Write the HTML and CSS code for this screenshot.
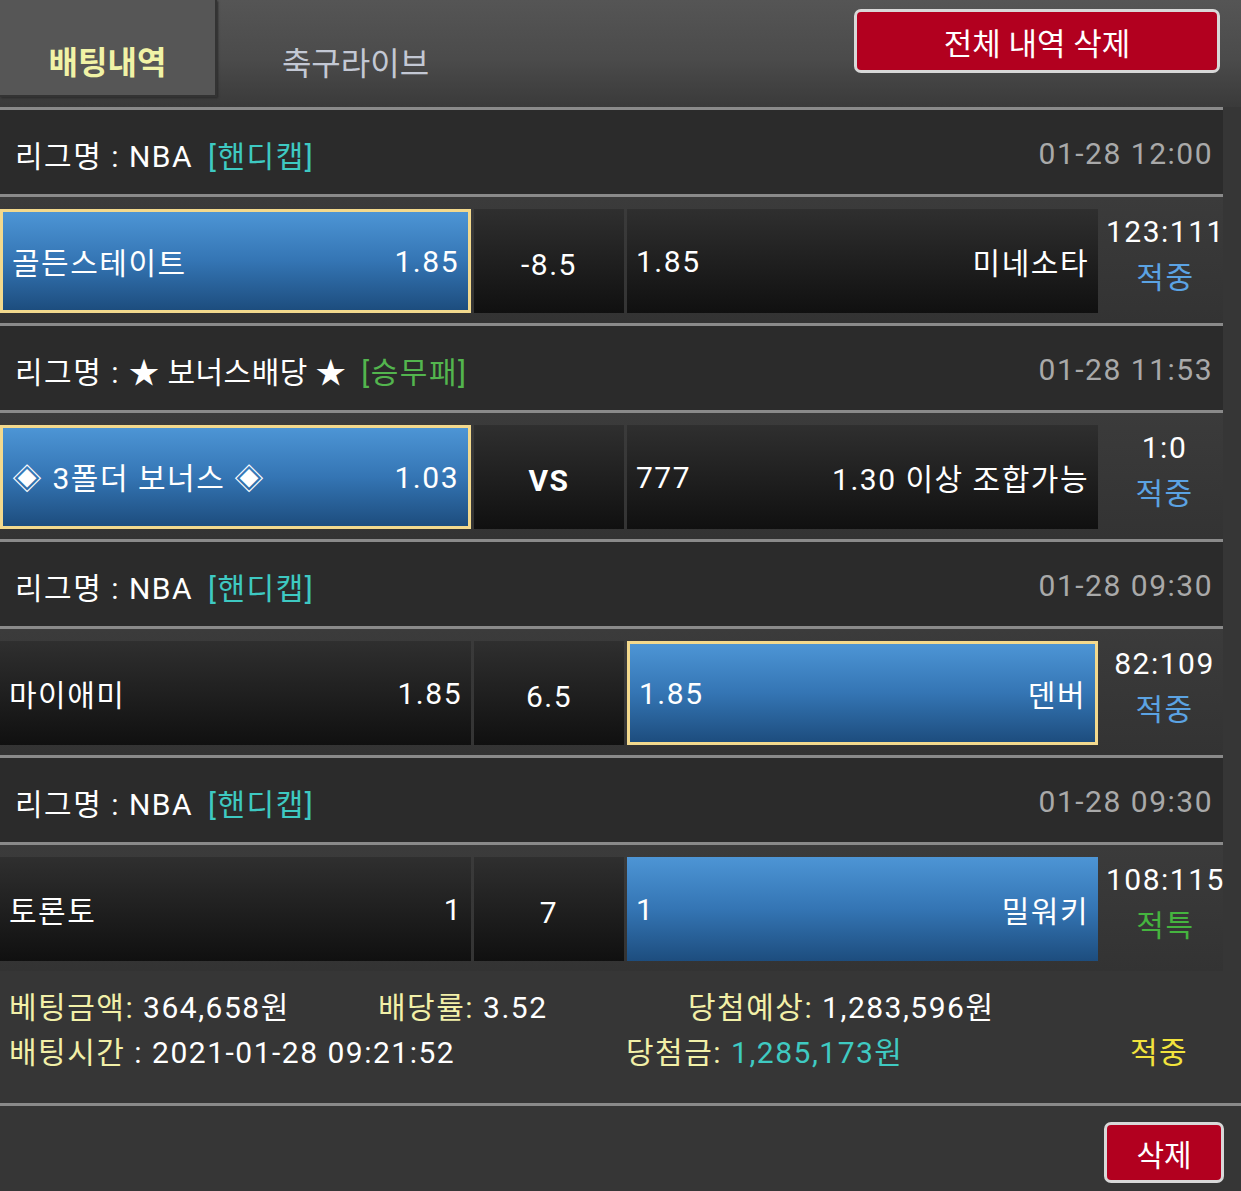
FILE: index.html
```html
<!DOCTYPE html>
<html lang="ko">
<head>
    <meta charset="UTF-8">
    <title>배팅내역</title>
    <link rel="stylesheet" href="styles.css">
</head>
<body>
    <div class="topbar">
        <div class="tabs">
            <div class="tab active">배팅내역</div>
            <div class="tab">축구라이브</div>
        </div>
        <button class="btn-red btn-all">전체 내역 삭제</button>
    </div>

    <div class="bet">
        <div class="league">
            <span>리그명 : NBA <span class="type handi">[핸디캡]</span></span>
            <span class="date">01-28 12:00</span>
        </div>
        <div class="match">
            <div class="cell side picked"><span>골든스테이트</span><span>1.85</span></div>
            <div class="cell mid">-8.5</div>
            <div class="cell side"><span>1.85</span><span>미네소타</span></div>
            <div class="score"><div>123:111</div><div class="res hit">적중</div></div>
        </div>

        <div class="league">
            <span>리그명 : <span class="bonus">★ 보너스배당 ★</span> <span class="type wdl">[승무패]</span></span>
            <span class="date">01-28 11:53</span>
        </div>
        <div class="match">
            <div class="cell side picked"><span>◈ 3폴더 보너스 ◈</span><span>1.03</span></div>
            <div class="cell mid vs">VS</div>
            <div class="cell side"><span>777</span><span>1.30 이상 조합가능</span></div>
            <div class="score"><div>1:0</div><div class="res hit">적중</div></div>
        </div>

        <div class="league">
            <span>리그명 : NBA <span class="type handi">[핸디캡]</span></span>
            <span class="date">01-28 09:30</span>
        </div>
        <div class="match">
            <div class="cell side"><span>마이애미</span><span>1.85</span></div>
            <div class="cell mid">6.5</div>
            <div class="cell side picked"><span>1.85</span><span>덴버</span></div>
            <div class="score"><div>82:109</div><div class="res hit">적중</div></div>
        </div>

        <div class="league">
            <span>리그명 : NBA <span class="type handi">[핸디캡]</span></span>
            <span class="date">01-28 09:30</span>
        </div>
        <div class="match">
            <div class="cell side"><span>토론토</span><span>1</span></div>
            <div class="cell mid">7</div>
            <div class="cell side blue"><span>1</span><span>밀워키</span></div>
            <div class="score"><div>108:115</div><div class="res special">적특</div></div>
        </div>

        <div class="summary">
            <div class="sum-row">
                <span class="s1"><span class="lbl">베팅금액:</span> 364,658원</span>
                <span class="s2"><span class="lbl">배당률:</span> 3.52</span>
                <span><span class="lbl">당첨예상:</span> 1,283,596원</span>
            </div>
            <div class="sum-row">
                <span class="s3"><span class="lbl">배팅시간</span> : 2021-01-28 09:21:52</span>
                <span class="s4"><span class="lbl">당첨금:</span> <span class="won">1,285,173원</span></span>
                <span class="final">적중</span>
            </div>
        </div>
    </div>

    <div class="actions">
        <button class="btn-red btn-del">삭제</button>
    </div>
</body>
</html>
```

FILE: styles.css
```css
body { margin: 0; background: #363636; color: #fff; font-family: Roboto, "Noto Sans CJK KR", sans-serif; font-size: 30px; letter-spacing: 1.5px; }

.topbar { height: 107px; display: flex; justify-content: space-between; align-items: flex-start; background: linear-gradient(#555 0%, #4b4b4b 55%, #3a3a3a 100%); }
.tabs { display: flex; }
.tab { width: 217px; height: 97px; display: flex; align-items: center; justify-content: center; padding-top: 24px; box-sizing: border-box; color: #c3c8d4; font-size: 32px; letter-spacing: 0; }
.tab + .tab { margin-left: 30px; }
.tab.active { background: #565656; color: #f1f3a6; font-weight: bold; box-shadow: 1px 1px 2px #2a2a2a; border-right: 2px solid #333; border-bottom: 2px solid #333; }

.btn-red { background: #b2001f; color: #fff; border: 3px solid #d8d8d8; border-radius: 7px; font-family: inherit; padding: 0; letter-spacing: 0; }
.btn-all { width: 366px; height: 64px; margin: 9px 21px 0 0; font-size: 31px; }
.btn-del { width: 120px; height: 61px; font-size: 30px; }

.bet { width: 1223px; }
.league { border-top: 3px solid #8a8a8a; background: #2b2b2b; display: flex; align-items: center; justify-content: space-between; padding: 3px 10px 0 15px; height: 81px; }
.type { margin-left: 6px; }
.bonus { letter-spacing: 0.5px; }
.handi { color: #3ec9c2; }
.wdl { color: #53b54e; }
.date { color: #a9a9a9; }

.match { border-top: 3px solid #8a8a8a; background: linear-gradient(#3b3b3b, #333); padding: 12px 0 10px; display: grid; grid-template-columns: 471px 150px 471px 1fr; column-gap: 3px; }
.cell { height: 104px; box-sizing: border-box; display: flex; align-items: center; background: linear-gradient(#2f2f2f, #101010); }
.side { justify-content: space-between; padding: 0 9px 0 9px; }
.mid { justify-content: center; padding-top: 6px; }
.vs { font-weight: bold; }
.picked, .blue { background: linear-gradient(#4d95d5 0%, #3475b4 50%, #1d4d7e 100%); }
.picked { border: 3px solid #f3d98d; }
.score { text-align: center; line-height: 46px; padding-left: 5px; }
.res.hit { color: #5ba3e3; }
.res.special { color: #45b43f; }

.summary { padding: 14px 0 28px 9px; line-height: 45px; }
.sum-row { display: flex; }
.s1 { width: 369px; }
.s2 { width: 310px; }
.s3 { width: 617px; }
.s4 { width: 504px; }
.lbl { color: #f2f0a8; }
.won { color: #3fcac2; }
.final { color: #f2e33d; }

.actions { border-top: 3px solid #8a8a8a; display: flex; justify-content: flex-end; padding: 16px 17px 20px 0; }
```
